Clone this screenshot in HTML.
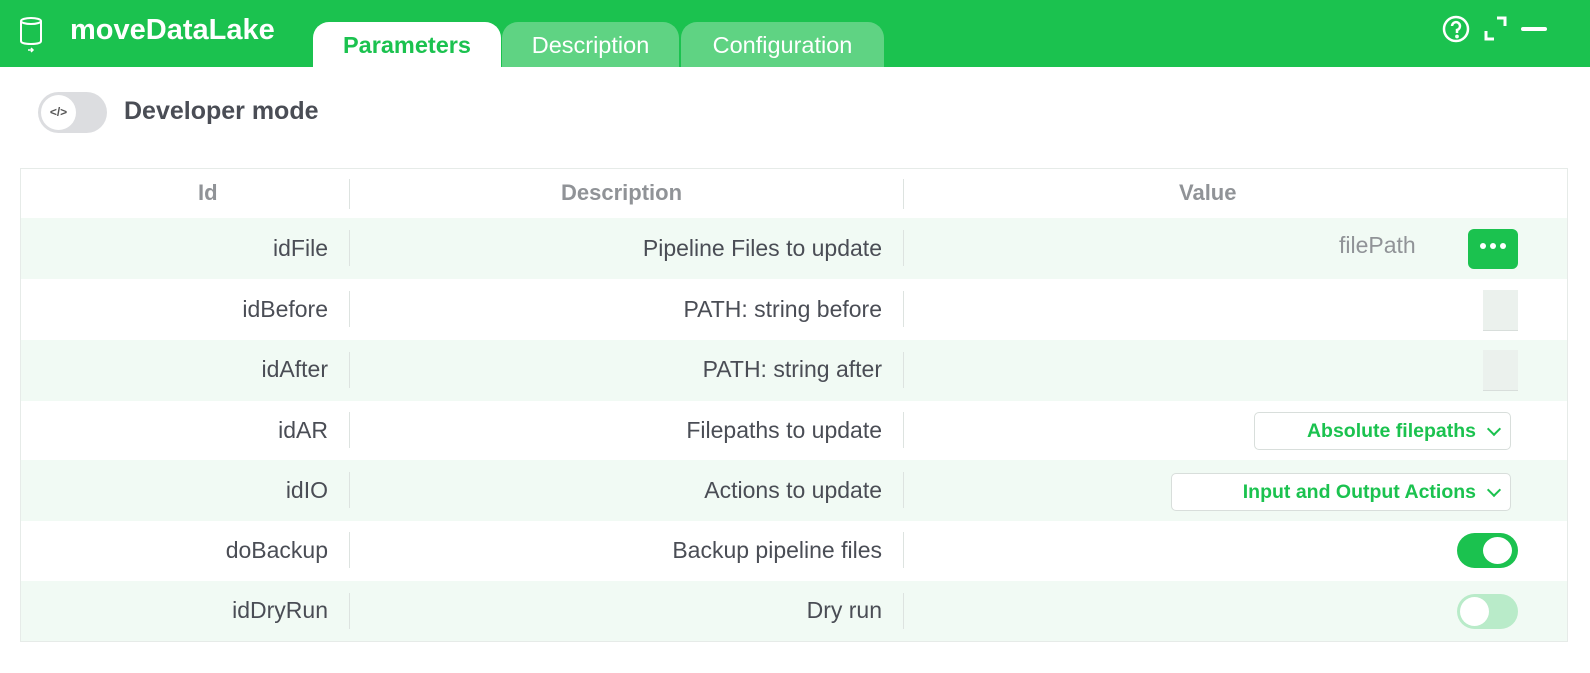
<!DOCTYPE html>
<html><head><style>
*{margin:0;padding:0;box-sizing:border-box}
body{width:1590px;height:673px;background:#fff;font-family:"Liberation Sans","Noto Sans CJK JP",sans-serif;position:relative;overflow:hidden;color:#4a4d55}
.hdr{position:absolute;left:0;top:0;width:1590px;height:67px;background:#1bc24f}
.title{position:absolute;left:70px;top:14px;color:#fff;font-weight:bold;font-size:29px}
.tab{position:absolute;top:22px;height:45px;border-radius:16px 16px 0 0;background:#5fd383;color:#fff;font-size:23.5px;text-align:center;line-height:46px}
.ab{position:absolute}
.row{position:absolute;left:21px;width:1546px;height:61px}
.c{position:absolute;font-size:23px;color:#4a4d55;white-space:nowrap}
.sep{position:absolute;width:1px;background:#dde3e0}
.th{position:absolute;top:180px;font-size:22px;font-weight:bold;color:#909397}
.sel{position:absolute;height:38px;border:1px solid #d8dedb;border-radius:5px;background:#fff;color:#1bc24f;font-weight:bold;font-size:19.5px;line-height:36px;text-align:right;padding-right:34px}
.sel:after{content:"";position:absolute;right:11px;top:11px;width:8px;height:8px;border-right:2px solid #1bc24f;border-bottom:2px solid #1bc24f;transform:rotate(45deg)}
</style></head><body>
<div class="hdr"></div>
<svg class="ab" style="left:17px;top:17px" width="30" height="36" viewBox="0 0 30 36" fill="none" stroke="#fff" stroke-width="2"><ellipse cx="14" cy="4" rx="10" ry="3"/><path d="M4 4v20c0 2 4 3 10 3s10-1 10-3V4"/><path d="M11 33h5M14 31l2 2-2 2" stroke-width="1.5"/></svg>
<div class="title">moveDataLake</div>
<div class="tab" style="left:313px;width:188px;background:#fff;color:#1bc24f;font-weight:bold">Parameters</div>
<div class="tab" style="left:502px;width:177px">Description</div>
<div class="tab" style="left:681px;width:203px">Configuration</div>
<svg class="ab" style="left:1442px;top:15px" width="110" height="30" viewBox="0 0 110 30" fill="none" stroke="#fff" stroke-width="2.5"><circle cx="14" cy="14" r="12"/><path d="M10 11a4 4 0 1 1 5 4v3" /><circle cx="15" cy="21.5" r="0.6" fill="#fff"/><path d="M44 16v8h8M55 3h8v8" stroke-width="3"/><path d="M81 14h22" stroke-width="4" stroke-linecap="round"/></svg>
<div class="ab" style="left:38px;top:92px;width:69px;height:41px;border-radius:21px;background:#dcdde0"></div>
<div class="ab" style="left:41px;top:95px;width:35px;height:35px;border-radius:50%;background:#fff;font-size:12px;text-align:center;line-height:35px;color:#555;font-weight:bold">&lt;/&gt;</div>
<div class="ab" style="left:124px;top:97px;font-size:25px;font-weight:bold;color:#4a4d55">Developer mode</div>
<div class="ab" style="left:20px;top:168px;width:1548px;height:474px;border:1px solid #e6ebe8"></div>
<div class="th" style="left:198px">Id</div>
<div class="th" style="left:561px">Description</div>
<div class="th" style="left:1179px">Value</div>
<div class="sep" style="left:349px;top:179px;height:30px"></div>
<div class="sep" style="left:903px;top:179px;height:30px"></div>

<div class="row" style="top:218px;background:#f1faf4"></div>
<div class="row" style="top:279px"></div>
<div class="row" style="top:340px;background:#f1faf4"></div>
<div class="row" style="top:400px"></div>
<div class="row" style="top:460px;background:#f1faf4"></div>
<div class="row" style="top:520px"></div>
<div class="row" style="top:581px;background:#f1faf4;height:60px"></div>

<div class="c" style="right:1262px;top:235px">idFile</div>
<div class="c" style="right:708px;top:235px">Pipeline Files to update</div>
<div class="c" style="right:1262px;top:296px">idBefore</div>
<div class="c" style="right:708px;top:296px">PATH: string before</div>
<div class="c" style="right:1262px;top:356px">idAfter</div>
<div class="c" style="right:708px;top:356px">PATH: string after</div>
<div class="c" style="right:1262px;top:417px">idAR</div>
<div class="c" style="right:708px;top:417px">Filepaths to update</div>
<div class="c" style="right:1262px;top:477px">idIO</div>
<div class="c" style="right:708px;top:477px">Actions to update</div>
<div class="c" style="right:1262px;top:537px">doBackup</div>
<div class="c" style="right:708px;top:537px">Backup pipeline files</div>
<div class="c" style="right:1262px;top:597px">idDryRun</div>
<div class="c" style="right:708px;top:597px">Dry run</div>

<div class="sep" style="left:349px;top:230px;height:36px"></div><div class="sep" style="left:903px;top:230px;height:36px"></div>
<div class="sep" style="left:349px;top:291px;height:36px"></div><div class="sep" style="left:903px;top:291px;height:36px"></div>
<div class="sep" style="left:349px;top:352px;height:36px"></div><div class="sep" style="left:903px;top:352px;height:36px"></div>
<div class="sep" style="left:349px;top:412px;height:36px"></div><div class="sep" style="left:903px;top:412px;height:36px"></div>
<div class="sep" style="left:349px;top:472px;height:36px"></div><div class="sep" style="left:903px;top:472px;height:36px"></div>
<div class="sep" style="left:349px;top:532px;height:36px"></div><div class="sep" style="left:903px;top:532px;height:36px"></div>
<div class="sep" style="left:349px;top:593px;height:36px"></div><div class="sep" style="left:903px;top:593px;height:36px"></div>

<div class="c" style="left:1339px;top:232px;color:#909397">filePath</div>
<div class="ab" style="left:1468px;top:229px;width:50px;height:40px;border-radius:6px;background:#1bc24f"></div>
<svg class="ab" style="left:1468px;top:229px" width="50" height="40"><circle cx="15" cy="17" r="3" fill="#fff"/><circle cx="25" cy="17" r="3" fill="#fff"/><circle cx="35" cy="17" r="3" fill="#fff"/></svg>
<div class="ab" style="left:1483px;top:290px;width:35px;height:41px;background:#ebf1ed;border-bottom:1px solid #d8dedb"></div>
<div class="ab" style="left:1483px;top:350px;width:35px;height:41px;background:#ebf1ed;border-bottom:1px solid #d8dedb"></div>
<div class="sel" style="left:1254px;top:412px;width:257px">Absolute filepaths</div>
<div class="sel" style="left:1171px;top:473px;width:340px">Input and Output Actions</div>
<div class="ab" style="left:1457px;top:533px;width:61px;height:35px;border-radius:18px;background:#1bc24f"></div>
<div class="ab" style="left:1483px;top:537px;width:29px;height:27px;border-radius:50%;background:#fff"></div>
<div class="ab" style="left:1457px;top:594px;width:61px;height:35px;border-radius:18px;background:#b9ebc9"></div>
<div class="ab" style="left:1460px;top:597px;width:29px;height:29px;border-radius:50%;background:#fff"></div>
</body></html>
